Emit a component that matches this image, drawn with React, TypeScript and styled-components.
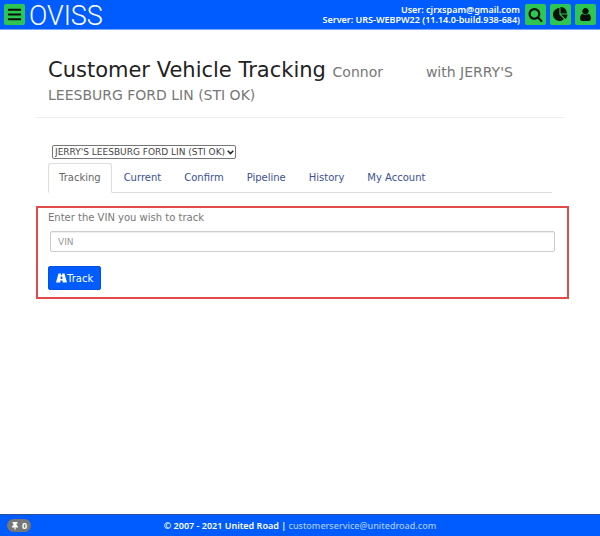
import React from "react";
import styled, { createGlobalStyle } from "styled-components";
import { FaBars, FaThumbtack } from "react-icons/fa";

const GlobalStyle = createGlobalStyle`
  * { box-sizing: border-box; }
  body {
    margin: 0;
    background: #fff;
    color: #777;
    font-family: "DejaVu Sans", Verdana, sans-serif;
    font-size: 10px;
  }
  button, input, select { font-family: inherit; }
`;

const Page = styled.div`
  display: flex;
  flex-direction: column;
  min-height: 100vh;
`;

const Header = styled.header`
  display: flex;
  align-items: center;
  gap: 4px;
  height: 30px;
  padding: 0 4px;
  background: #005cff;
  border-bottom: 1px solid #7ba9f8;
  color: #fff;
`;

const IconButton = styled.button`
  display: flex;
  align-items: center;
  justify-content: center;
  width: 21px;
  height: 21px;
  padding: 0;
  border: 0;
  border-radius: 2px;
  background: #2dc653;
  color: #0a0f0a;
`;

const Logo = styled.a`
  flex: 1;
  padding-top: 4px;
  color: #fff;
  font-family: Roboto, "Liberation Sans Narrow", sans-serif;
  font-size: 27px;
  font-weight: 300;
  line-height: 29px;
  text-decoration: none;
`;

const Session = styled.div`
  margin-right: 1px;
  font-family: "Noto Sans", sans-serif;
  font-size: 9px;
  font-weight: 600;
  line-height: 10px;
  text-align: right;
`;

const Main = styled.main`
  flex: 1;
  padding: 29px 36px 0;
`;

const TitleBar = styled.div`
  padding: 0 12px 12px;
  border-bottom: 1px solid #eee;
`;

const Title = styled.h1`
  margin: 0;
  color: #222;
  font-size: 21px;
  font-weight: 400;
  line-height: 23px;
`;

const Customer = styled.small`
  color: #777;
  font-size: 14px;
  line-height: 14px;
`;

const HiddenName = styled.span`
  display: inline-block;
  width: 34px;
`;

const Content = styled.div`
  padding: 27px 12px 0;
`;

const SelectWrap = styled.div`
  display: grid;
  grid-template-columns: 184px;
  align-items: center;
  margin-left: 4px;
  > * { grid-area: 1 / 1; }
  svg {
    justify-self: end;
    margin-right: 2px;
    color: #222;
    pointer-events: none;
  }
`;

const LocationSelect = styled.select`
  appearance: none;
  height: 14px;
  padding: 0 2px;
  border: 1px solid #767676;
  border-radius: 2px;
  background: #fff;
  color: #444;
  font-size: 9px;
  line-height: 12px;
`;

const Tabs = styled.nav`
  display: flex;
  gap: 1px;
  margin-top: 4px;
  border-bottom: 1px solid #ddd;
`;

const Tab = styled.a<{ $active?: boolean }>`
  margin-bottom: -1px;
  padding: 0 10px;
  border: 1px solid ${(p) => (p.$active ? "#ddd" : "transparent")};
  border-bottom-color: ${(p) => (p.$active ? "#fff" : "transparent")};
  border-radius: 3px 3px 0 0;
  color: ${(p) => (p.$active ? "#666" : "#3c5190")};
  font-size: 10px;
  line-height: 28px;
  text-decoration: none;
`;

const TrackForm = styled.form`
  display: flex;
  flex-direction: column;
  align-items: flex-start;
  margin: 13px -17px 0 -12px;
  padding: 2px 12px 7px 10px;
  border: 2px solid #e34a4a;
`;

const FieldLabel = styled.label`
  font-size: 10px;
  line-height: 16px;
`;

const VinInput = styled.input`
  align-self: stretch;
  height: 21px;
  margin: 5px 0 14px 2px;
  padding: 0 7px;
  border: 1px solid #ccc;
  border-radius: 2px;
  box-shadow: inset 0 1px 1px #eee;
  color: #555;
  font-size: 9px;
  &::placeholder { color: #999; opacity: 1; }
`;

const TrackButton = styled.button`
  display: flex;
  align-items: center;
  height: 24px;
  padding: 0 7px;
  border: 1px solid #0052e6;
  border-radius: 2px;
  background: #005cff;
  color: #fff;
  font-size: 10px;
`;

const Footer = styled.footer`
  display: grid;
  grid-template-columns: 1fr auto 1fr;
  align-items: center;
  height: 22px;
  padding: 0 7px;
  background: #005cff;
  border-top: 1px solid #2950a0;
  color: #fff;
  font-family: "Noto Sans", sans-serif;
  font-size: 9px;
  font-weight: 600;
`;

const Pinned = styled.button`
  display: flex;
  align-items: center;
  justify-content: center;
  justify-self: start;
  gap: 3px;
  width: 24px;
  height: 13px;
  padding: 0;
  border: 0;
  border-radius: 7px;
  background: #777;
  color: #fff;
  font-size: 9px;
  font-weight: 700;
`;

const MailLink = styled.a`
  color: #a9c8ff;
  font-weight: 500;
  text-decoration: none;
`;

const Glyph = ({ d, size }: { d: string; size: number }) => (
  <svg width={size} height={size} viewBox="0 0 1792 1792" fill="currentColor" aria-hidden="true">
    <path d={d} />
  </svg>
);

const searchPath =
  "M1216 832q0-185-131.5-316.5t-316.5-131.5-316.5 131.5-131.5 316.5 131.5 316.5 316.5 131.5 316.5-131.5 131.5-316.5zm512 832q0 52-38 90t-90 38q-54 0-90-38l-343-342q-179 124-399 124-143 0-273.5-55.5t-225-150-150-225-55.5-273.5 55.5-273.5 150-225 225-150 273.5-55.5 273.5 55.5 225 150 150 225 55.5 273.5q0 220-124 399l343 343q37 37 37 90z";
const piePath =
  "M768 890l546 546q-106 108-247.5 168t-298.5 60q-209 0-385.5-103t-279.5-279.5-103-385.5 103-385.5 279.5-279.5 385.5-103v762zm187 6h773q0 157-60 298.5t-168 247.5zm709-128h-768v-768q209 0 385.5 103t279.5 279.5 103 385.5z";
const userPath =
  "M1536 1399q0 109-62.5 187t-150.5 78h-854q-88 0-150.5-78t-62.5-187q0-85 8.5-160.5t31.5-152 58.5-131 94-89 134.5-34.5q131 128 313 128t313-128q76 0 134.5 34.5t94 89 58.5 131 31.5 152 8.5 160.5zm-256-887q0 159-112.5 271.5t-271.5 112.5-271.5-112.5-112.5-271.5 112.5-271.5 271.5-112.5 271.5 112.5 112.5 271.5z";

const tabs = ["Tracking", "Current", "Confirm", "Pipeline", "History", "My Account"];

export default function App() {
  return (
    <Page>
      <GlobalStyle />
      <Header>
        <IconButton aria-label="Menu"><FaBars size={15} /></IconButton>
        <Logo href="#">OVISS</Logo>
        <Session>
          <div>User: cjrxspam@gmail.com</div>
          <div>Server: URS-WEBPW22 (11.14.0-build.938-684)</div>
        </Session>
        <IconButton aria-label="Search"><Glyph d={searchPath} size={15} /></IconButton>
        <IconButton aria-label="Reports"><Glyph d={piePath} size={15} /></IconButton>
        <IconButton aria-label="Account"><Glyph d={userPath} size={15} /></IconButton>
      </Header>
      <Main>
        <TitleBar>
          <Title>
            Customer Vehicle Tracking{" "}
            <Customer>Connor <HiddenName /> with JERRY'S LEESBURG FORD LIN (STI OK)</Customer>
          </Title>
        </TitleBar>
        <Content>
          <SelectWrap>
            <LocationSelect aria-label="Location">
              <option>JERRY'S LEESBURG FORD LIN (STI OK)</option>
            </LocationSelect>
            <svg width="7" height="5" viewBox="0 0 7 5" fill="none" stroke="currentColor" strokeWidth="1.500" aria-hidden="true">
              <path d="M.7.8l2.800 2.800L6.300.8" />
            </svg>
          </SelectWrap>
          <Tabs>
            {tabs.map((name, i) => (
              <Tab key={name} href="#" $active={i === 0}>{name}</Tab>
            ))}
          </Tabs>
          <TrackForm onSubmit={(e) => e.preventDefault()}>
            <FieldLabel htmlFor="vin">Enter the VIN you wish to track</FieldLabel>
            <VinInput id="vin" type="text" placeholder="VIN" />
            <TrackButton type="submit">
              <svg width="11" height="10" viewBox="0 0 22 20" fill="currentColor" aria-hidden="true">
                <path d="M5 1h4.800l-.2 3h2.800l-.2-3H17l5 18h-8.500l-.4-4H8.900l-.4 4H0zM9.300 7l-.2 5h3.800l-.2-5z" fillRule="evenodd" />
              </svg>
              Track
            </TrackButton>
          </TrackForm>
        </Content>
      </Main>
      <Footer>
        <Pinned aria-label="Pinned items: 0"><FaThumbtack size={8} />0</Pinned>
        <div>© 2007 - 2021 United Road | <MailLink href="mailto:customerservice@unitedroad.com">customerservice@unitedroad.com</MailLink></div>
      </Footer>
    </Page>
  );
}
